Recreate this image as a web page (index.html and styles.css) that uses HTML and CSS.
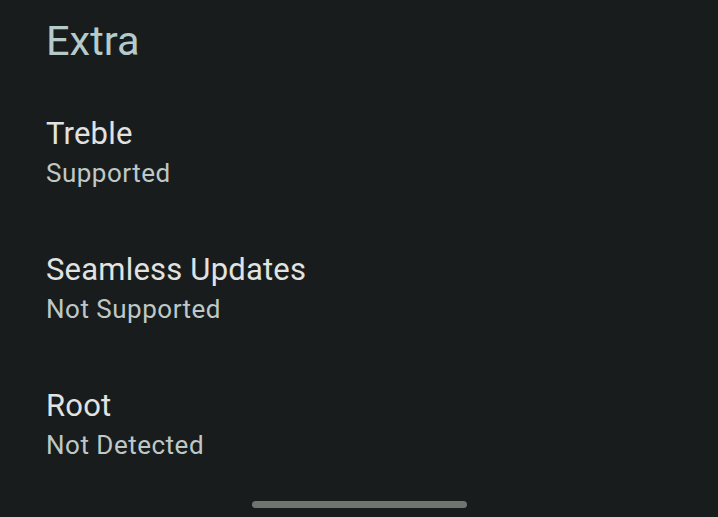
FILE: index.html
```html
<!DOCTYPE html>
<html lang="en">
<head>
    <meta charset="UTF-8">
    <meta name="viewport" content="width=device-width, initial-scale=1.0">
    <title>Extra</title>
    <link rel="stylesheet" href="styles.css">
</head>
<body>
    <div class="screen">
        <h1 class="section-title">Extra</h1>
        <ul class="info-list">
            <li class="info-item">
                <div class="info-title">Treble</div>
                <div class="info-value">Supported</div>
            </li>
            <li class="info-item">
                <div class="info-title">Seamless Updates</div>
                <div class="info-value">Not Supported</div>
            </li>
            <li class="info-item">
                <div class="info-title">Root</div>
                <div class="info-value">Not Detected</div>
            </li>
        </ul>
        <div class="home-bar"></div>
    </div>
</body>
</html>
```

FILE: styles.css
```css
html, body{
    margin: 0;
    padding: 0;
    background-color: #191c1c;
}
.screen{
    position: relative;
    width: 718px;
    height: 517px;
    overflow: hidden;
    font-family: Roboto, "Noto Sans", sans-serif;
}
.section-title{
    margin: 0;
    padding: 13px 0 0 46px;
    font-size: 41.5px;
    font-weight: 400;
    line-height: 56px;
    color: #b4cbca;
}
.info-list{
    list-style: none;
    margin: 0;
    padding: 46px 0 0 46px;
    display: flex;
    flex-direction: column;
    gap: 58px;
}
.info-title{
    font-size: 31px;
    line-height: 38px;
    color: #e1e3e2;
    letter-spacing: 0.2px;
}
.info-value{
    font-size: 26px;
    line-height: 40px;
    color: #bec8c7;
    letter-spacing: 0.5px;
}
.home-bar{
    position: absolute;
    left: 252px;
    bottom: 9px;
    width: 215px;
    height: 7px;
    border-radius: 4px;
    background-color: #6f7471;
}
```
